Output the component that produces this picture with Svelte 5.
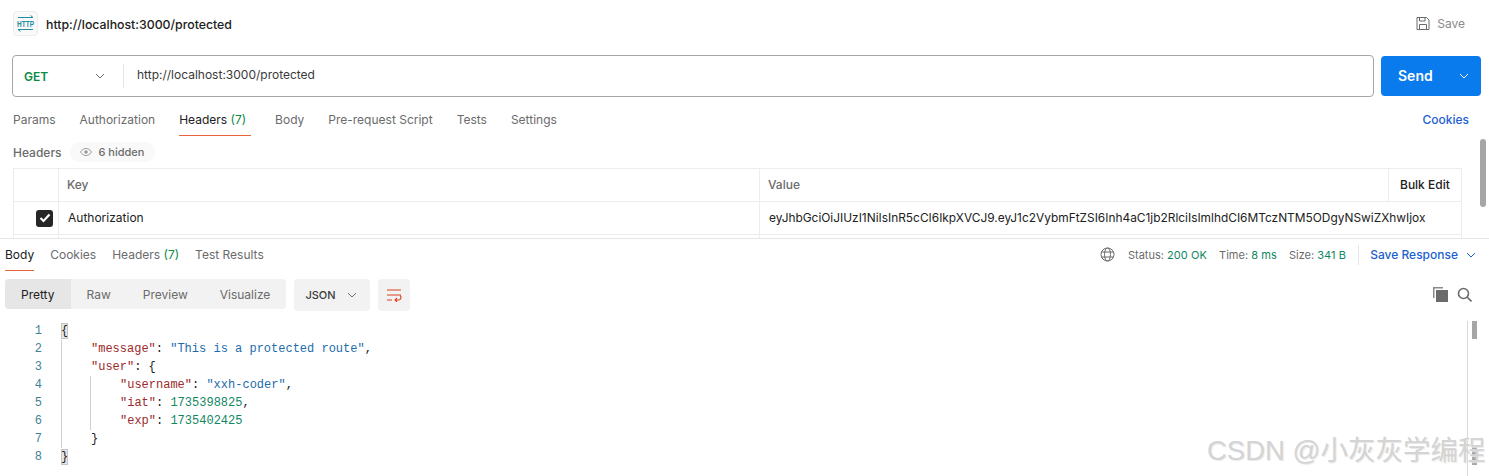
<script lang="ts">
	const requestTabs = ['Params', 'Authorization', 'Headers', 'Body', 'Pre-request Script', 'Tests', 'Settings'];
	const responseTabs = ['Body', 'Cookies', 'Headers', 'Test Results'];
	const viewModes = ['Pretty', 'Raw', 'Preview', 'Visualize'];
	const token =
		'eyJhbGciOiJIUzI1NiIsInR5cCI6IkpXVCJ9.eyJ1c2VybmFtZSI6Inh4aC1jb2RlciIsImlhdCI6MTczNTM5ODgyNSwiZXhwIjox';
</script>

<div class="page">
	<section class="request">
		<header class="title-row">
			<div class="title">
				<span class="http-icon">
					<svg width="19" height="19" viewBox="0 0 19 19" fill="none" stroke="#1f8f9f" stroke-width="1">
						<path d="M2 3.500h15M14.500 1.500l2.500 2M17 15.500h-15M4.500 17.500l-2.500-2" />
						<text transform="translate(9.500 12.600) scale(1 1.300)" text-anchor="middle" class="http-text">HTTP</text>
					</svg>
				</span>
				<span class="title-text">http://localhost:3000/protected</span>
			</div>
			<div class="save">
				<svg width="14" height="15" viewBox="0 0 14 15" fill="none" stroke="#6b6b6b" stroke-width="1">
					<path d="M1 1.500h9.500l2.500 2.500v9.500h-12z" />
					<path d="M3.500 1.500v3.500h5.500v-3.500M3.500 13.500v-5h7v5" />
				</svg>
				<span>Save</span>
			</div>
		</header>

		<div class="url-row">
			<div class="url-box">
				<div class="method">
					<span>GET</span>
					<svg width="10" height="6" viewBox="0 0 10 6" fill="none" stroke="#6b6b6b"><path d="M1 1l4 4 4-4" /></svg>
				</div>
				<div class="url">http://localhost:3000/protected</div>
			</div>
			<div class="send">
				<span>Send</span>
				<svg width="10" height="6" viewBox="0 0 10 6" fill="none" stroke="#fff"><path d="M1 1l4 4 4-4" /></svg>
			</div>
		</div>

		<nav class="req-tabs">
			<div class="tab-list">
				{#each requestTabs as tab}
					<span class="req-tab" class:active={tab === 'Headers'}>
						{tab}{#if tab === 'Headers'}&nbsp;<span class="count">(7)</span>{/if}
					</span>
				{/each}
			</div>
			<span class="cookies">Cookies</span>
		</nav>

		<div class="headers-label">
			<span class="label">Headers</span>
			<span class="hidden-pill">
				<svg width="12" height="8" viewBox="0 0 12 8">
					<path d="M0.500 4C2 1.500 4 .5 6 .5S10 1.500 11.500 4C10 6.500 8 7.500 6 7.500S2 6.500 .5 4z" fill="none" stroke="#9a9a9a" />
					<circle cx="6" cy="4" r="1.800" fill="#9a9a9a" />
				</svg>
				6 hidden
			</span>
		</div>

		<div class="table">
			<div class="cell check"></div>
			<div class="cell head">Key</div>
			<div class="cell head">Value</div>
			<div class="cell bulk">Bulk Edit</div>
			<div class="cell check">
				<span class="checkbox">
					<svg width="12" height="10" viewBox="0 0 12 10" fill="none" stroke="#fff" stroke-width="2.200"><path d="M1.500 5l3 3 6-6.500" /></svg>
				</span>
			</div>
			<div class="cell">Authorization</div>
			<div class="cell token">{token}</div>
			<div class="cell"></div>
			<div class="cell"></div>
			<div class="cell token"></div>
		</div>

		<div class="req-scroll"></div>
	</section>

	<section class="response">
		<div class="res-tabs">
			<div class="tab-list small">
				{#each responseTabs as tab}
					<span class="res-tab" class:active={tab === 'Body'}>
						{tab}{#if tab === 'Headers'}&nbsp;<span class="count">(7)</span>{/if}
					</span>
				{/each}
			</div>
			<div class="status">
				<svg width="15" height="15" viewBox="0 0 15 15" fill="none" stroke="#6b6b6b">
					<circle cx="7.500" cy="7.500" r="6.500" />
					<ellipse cx="7.500" cy="7.500" rx="3" ry="6.500" />
					<path d="M1.500 5h12M1.500 10h12" />
				</svg>
				<span class="stat">Status: <b>200 OK</b></span>
				<span class="stat">Time: <b>8 ms</b></span>
				<span class="stat">Size: <b>341 B</b></span>
				<span class="save-response">
					Save Response
					<svg width="10" height="6" viewBox="0 0 10 6" fill="none" stroke="#1d5fd0"><path d="M1 1l4 4 4-4" /></svg>
				</span>
			</div>
		</div>

		<div class="toolbar">
			<div class="modes">
				{#each viewModes as mode}
					<span class="mode" class:active={mode === 'Pretty'}>{mode}</span>
				{/each}
			</div>
			<div class="format">
				<span>JSON</span>
				<svg width="10" height="6" viewBox="0 0 10 6" fill="none" stroke="#6b6b6b"><path d="M1 1l4 4 4-4" /></svg>
			</div>
			<div class="wrap">
				<svg width="15" height="13" viewBox="0 0 15 13" fill="none" stroke="#d9411a" stroke-width="1.100">
					<path d="M0 1h14M0 6h14M0 11h5" />
					<path d="M13 6.500c1.800 1.500 .8 4.500-1.500 4.500H8M10 9l-2 2 2 2" />
				</svg>
			</div>
			<div class="tools">
				<svg width="15" height="15" viewBox="0 0 15 15">
					<path d="M0 0h10v1.500H1.500V11H0z" fill="#8a8a8a" />
					<rect x="3" y="3" width="12" height="12" fill="#6b6b6b" />
				</svg>
				<svg width="15" height="15" viewBox="0 0 15 15" fill="none" stroke="#6b6b6b" stroke-width="1.600">
					<circle cx="6.500" cy="6.500" r="5" />
					<path d="M10 10l4.500 4.500" />
				</svg>
			</div>
		</div>

		<div class="editor">
			<div class="gutter">
				{#each [1, 2, 3, 4, 5, 6, 7, 8] as n}<div>{n}</div>{/each}
			</div>
			<div class="code">
				<div><span class="bracket">&#123;</span></div>
				<div class="in1"><span class="k">"message"</span>: <span class="s">"This is a protected route"</span>,</div>
				<div class="in1"><span class="k">"user"</span>: &#123;</div>
				<div class="in2"><span class="k">"username"</span>: <span class="s">"xxh-coder"</span>,</div>
				<div class="in2"><span class="k">"iat"</span>: <span class="n">1735398825</span>,</div>
				<div class="in2"><span class="k">"exp"</span>: <span class="n">1735402425</span></div>
				<div class="in1">&#125;</div>
				<div><span class="bracket">&#125;</span></div>
				<span class="guide outer"></span>
				<span class="guide inner"></span>
			</div>
			<div class="minimap">
				<span class="thumb top"></span>
				<span class="thumb bottom"></span>
			</div>
		</div>
	</section>

	<div class="watermark">CSDN @小灰灰学编程</div>
</div>

<style>
	:global(body) {
		margin: 0;
		background: #fff;
	}
	.page {
		position: relative;
		width: 1489px;
		height: 476px;
		overflow: hidden;
		color: #212121;
		font-family: Inter, 'Noto Sans', sans-serif;
		font-size: 12px;
	}
	svg {
		display: block;
		flex: none;
	}

	/* request pane */
	.request {
		position: relative;
		height: 238px;
		overflow: hidden;
		border-bottom: 1px solid #e6e6e6;
		box-sizing: content-box;
	}
	.title-row {
		display: flex;
		align-items: center;
		justify-content: space-between;
		height: 25px;
		padding: 11px 24px 0 13px;
	}
	.title {
		display: flex;
		align-items: center;
		gap: 8px;
	}
	.http-icon {
		display: grid;
		place-items: center;
		width: 25px;
		height: 25px;
		box-sizing: border-box;
		background: #f9f9f9;
		border: 1px solid #ededed;
		border-radius: 4px;
	}
	.http-text {
		fill: #1f8f9f;
		stroke: none;
		font-family: 'Liberation Sans', sans-serif;
		font-size: 6.500px;
		font-weight: 700;
	}
	.title-text {
		margin-top: 2px;
		font-size: 12.300px;
		font-weight: 500;
		color: #212121;
	}
	.save {
		display: flex;
		align-items: center;
		gap: 7px;
		color: #8a8a8a;
	}
	.url-row {
		display: flex;
		gap: 7px;
		align-items: center;
		height: 42px;
		margin: 19px 8px 0 12px;
	}
	.url-box {
		flex: 1;
		display: flex;
		align-items: center;
		height: 42px;
		box-sizing: border-box;
		border: 1px solid #a6a6a6;
		border-radius: 4px;
	}
	.method {
		display: flex;
		align-items: center;
		justify-content: space-between;
		width: 111px;
		height: 24px;
		box-sizing: border-box;
		padding: 0 18px 0 11px;
		border-right: 1px solid #e6e6e6;
		color: #0a8a43;
		font-weight: 600;
	}
	.url {
		padding: 0 0 3px 13px;
		color: #3a3a3a;
	}
	.send {
		display: flex;
		align-items: center;
		justify-content: space-between;
		width: 100px;
		height: 40px;
		box-sizing: border-box;
		padding: 0 12px 0 17px;
		background: #097bed;
		border-radius: 4px;
		color: #fff;
		font-size: 14px;
		font-weight: 600;
	}
	.send span {
		padding-bottom: 1px;
	}
	.req-tabs {
		display: flex;
		justify-content: space-between;
		height: 39px;
		padding: 0 20px 0 13px;
	}
	.tab-list {
		display: flex;
		gap: 24px;
	}
	.req-tab {
		height: 39px;
		line-height: 45px;
		color: #6b6b6b;
		white-space: nowrap;
	}
	.req-tab.active {
		color: #212121;
		box-sizing: border-box;
		border-bottom: 1px solid #e8623a;
		padding-right: 5px;
	}
	.count {
		color: #0a8a43;
	}
	.cookies {
		line-height: 45px;
		color: #1d5fd0;
		font-weight: 500;
	}
	.headers-label {
		display: flex;
		align-items: center;
		gap: 8px;
		height: 32px;
		padding-left: 13px;
	}
	.label {
		color: #6b6b6b;
		font-weight: 500;
	}
	.hidden-pill {
		display: flex;
		align-items: center;
		gap: 7px;
		height: 20px;
		padding: 0 11px 0 10px;
		background: #f9f9f9;
		border-radius: 10px;
		color: #6b6b6b;
		font-size: 11px;
		font-weight: 500;
	}
	.table {
		display: grid;
		grid-template-columns: 45px 701px 629px 73px;
		width: 1449px;
		margin-left: 13px;
		border-left: 1px solid #ededed;
		border-top: 1px solid #ededed;
		box-sizing: border-box;
	}
	.cell {
		display: flex;
		align-items: center;
		height: 33px;
		box-sizing: border-box;
		padding: 0 0 1px 9px;
		border-right: 1px solid #ededed;
		border-bottom: 1px solid #ededed;
		white-space: nowrap;
		overflow: hidden;
	}
	.head {
		color: #6b6b6b;
		font-weight: 500;
		padding-left: 8px;
	}
	.bulk {
		font-weight: 500;
		padding-left: 11px;
	}
	.token {
		grid-column: span 2;
		font-size: 11.900px;
	}
	.check {
		justify-content: flex-end;
		padding: 0 5px 0 0;
	}
	.checkbox {
		display: grid;
		place-items: center;
		width: 17px;
		height: 17px;
		background: #262626;
		border-radius: 3px;
	}
	.req-scroll {
		position: absolute;
		top: 139px;
		right: 3px;
		width: 6px;
		height: 68px;
		background: #a6a6a6;
		border-radius: 3px;
	}

	/* response pane */
	.res-tabs {
		display: flex;
		justify-content: space-between;
		height: 32px;
		padding: 0 13px 0 5px;
	}
	.res-tabs .small {
		gap: 16px;
	}
	.res-tab {
		line-height: 32px;
		height: 32px;
		color: #6b6b6b;
		white-space: nowrap;
	}
	.res-tab.active {
		color: #212121;
		border-bottom: 1px solid #e8623a;
		height: 31px;
	}
	.status {
		display: flex;
		align-items: center;
		height: 31px;
		color: #6b6b6b;
		font-size: 11px;
	}
	.status > svg {
		margin-right: 1px;
	}
	.stat {
		margin-left: 12px;
	}
	.stat b {
		color: #0f8763;
		font-weight: 400;
		letter-spacing: 0.1px;
	}
	.save-response {
		display: flex;
		align-items: center;
		gap: 8px;
		margin-left: 12px;
		padding-left: 11px;
		height: 20px;
		border-left: 1px solid #e6e6e6;
		color: #1d5fd0;
		font-size: 12px;
		font-weight: 500;
	}
	.toolbar {
		display: flex;
		align-items: flex-start;
		height: 42px;
		margin-top: 8px;
		padding: 0 17px 0 5px;
	}
	.modes {
		display: flex;
		height: 30px;
		background: #f2f2f2;
		border-radius: 4px;
		overflow: hidden;
		color: #6b6b6b;
	}
	.mode {
		display: flex;
		align-items: center;
		padding: 0 16px;
		white-space: nowrap;
	}
	.mode.active {
		color: #212121;
		background: #e6e6e6;
	}
	.format {
		display: flex;
		align-items: center;
		justify-content: space-between;
		width: 76px;
		height: 32px;
		box-sizing: border-box;
		margin-left: 8px;
		padding: 0 13px 0 11px;
		background: #f2f2f2;
		border-radius: 4px;
		color: #3a3a3a;
		font-size: 11px;
		font-weight: 500;
	}
	.wrap {
		display: grid;
		place-items: center;
		width: 32px;
		height: 32px;
		margin-left: 8px;
		background: #f2f2f2;
		border-radius: 4px;
	}
	.tools {
		display: flex;
		gap: 9px;
		margin-left: auto;
		margin-top: 8px;
	}
	.editor {
		display: flex;
		height: 155px;
		font-family: 'Liberation Mono', monospace;
		font-size: 12px;
		line-height: 18px;
	}
	.gutter {
		width: 42px;
		padding-top: 1px;
		text-align: right;
		color: #3f8296;
	}
	.code {
		position: relative;
		flex: 1;
		margin-left: 19px;
		padding-top: 1px;
		color: #212121;
	}
	.in1 {
		padding-left: 30px;
	}
	.in2 {
		padding-left: 59px;
	}
	.k {
		color: #9c2a2a;
	}
	.s {
		color: #1c6cab;
	}
	.n {
		color: #0f8763;
	}
	.bracket {
		display: inline-block;
		width: 7px;
		height: 16px;
		line-height: 16px;
		background: #e6e6e6;
		outline: 1px solid #c4c4c4;
		outline-offset: -1px;
	}
	.guide {
		position: absolute;
		width: 1px;
		background: #d0d0d0;
	}
	.guide.outer {
		left: 0;
		top: 19px;
		height: 108px;
	}
	.guide.inner {
		left: 29px;
		top: 55px;
		height: 54px;
	}
	.minimap {
		position: relative;
		width: 22px;
		border-left: 1px solid #d9d9d9;
		box-sizing: border-box;
	}
	.thumb {
		position: absolute;
		left: 4px;
		width: 5px;
		height: 18px;
		background: #a6a6a6;
	}
	.thumb.top {
		top: 0;
	}
	.thumb.bottom {
		top: 126px;
	}
	.watermark {
		position: absolute;
		left: 1207px;
		top: 433px;
		color: #d4d4d4;
		font-family: 'Liberation Sans', 'Noto Sans CJK SC', sans-serif;
		font-size: 27.500px;
		line-height: 36px;
		white-space: nowrap;
		text-shadow: 1px 1px 1px #e8e8e8;
	}
</style>
